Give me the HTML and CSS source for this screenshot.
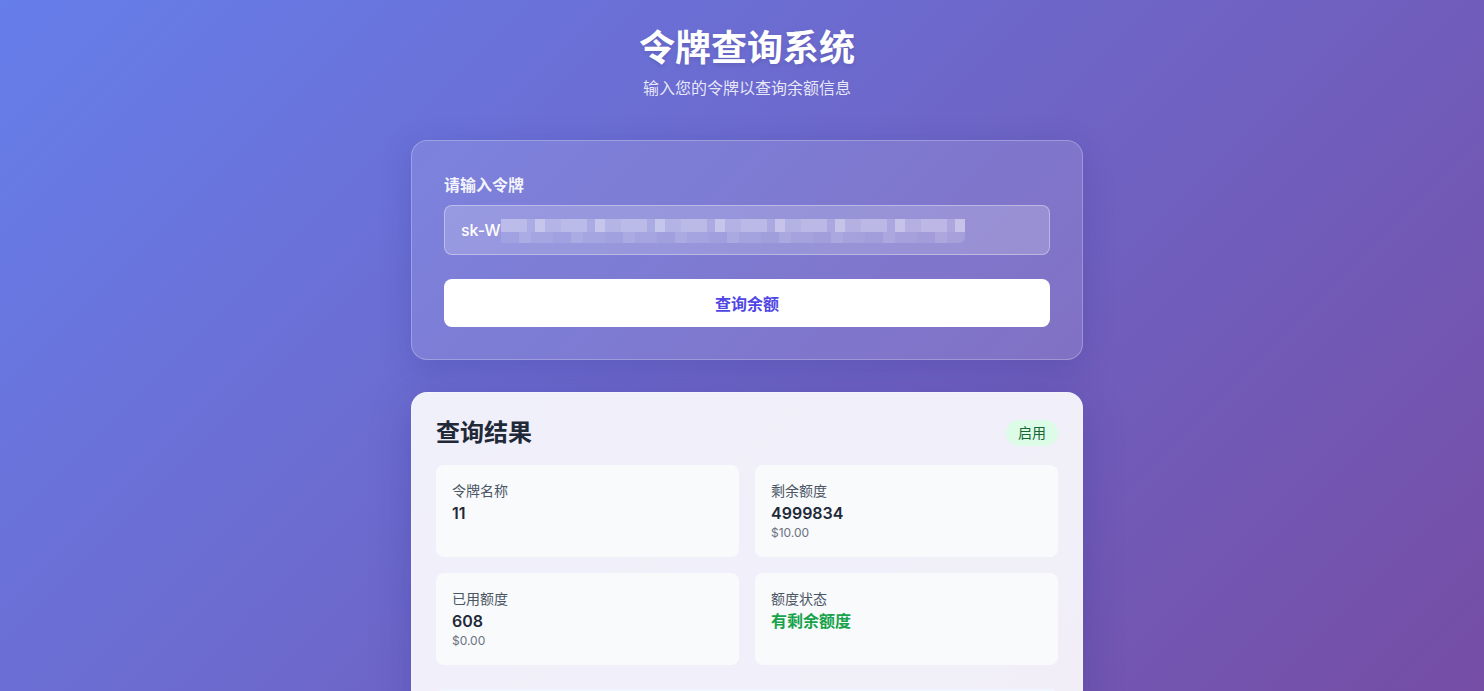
FILE: index.html
```html
<!DOCTYPE html>
<html lang="zh-CN">

<head>
    <meta charset="UTF-8">
    <meta name="viewport" content="width=device-width, initial-scale=1.0">
    <title>令牌查询系统</title>
    <link rel="stylesheet" href="styles.css">
</head>

<body>
    <div class="page">
        <header class="hero">
            <h1>令牌查询系统</h1>
            <p>输入您的令牌以查询余额信息</p>
        </header>

        <form class="query-card" id="queryForm">
            <label for="token">请输入令牌</label>
            <div class="token-input">
                <span class="token-text">sk-W</span>
                <span class="mosaic"></span>
            </div>
            <button type="button">查询余额</button>
        </form>

        <section class="result-card">
            <div class="result-head">
                <h2>查询结果</h2>
                <span class="badge">启用</span>
            </div>
            <div class="result-grid">
                <div class="cell">
                    <div class="cell-label">令牌名称</div>
                    <div class="cell-value">11</div>
                </div>
                <div class="cell">
                    <div class="cell-label">剩余额度</div>
                    <div class="cell-value">4999834</div>
                    <div class="cell-sub">$10.00</div>
                </div>
                <div class="cell">
                    <div class="cell-label">已用额度</div>
                    <div class="cell-value">608</div>
                    <div class="cell-sub">$0.00</div>
                </div>
                <div class="cell">
                    <div class="cell-label">额度状态</div>
                    <div class="cell-value ok">有剩余额度</div>
                </div>
            </div>
            <!-- next block starts just below the fold -->
            <div class="info-box"></div>
        </section>
    </div>
</body>

</html>
```

FILE: styles.css
```css
* {
    box-sizing: border-box;
}

body {
    margin: 0;
    padding-left: 10px;
    min-height: 100vh;
    font-family: Inter, "Noto Sans CJK SC", sans-serif;
    background: linear-gradient(135deg, #667eea 0%, #764ba2 100%);
    color: #1f2937;
}

.page {
    width: 672px;
    margin: 0 auto;
    padding-top: 28px;
}

.hero {
    text-align: center;
    color: #fff;
}

.hero h1 {
    margin: 0 0 8px;
    font-size: 36px;
    line-height: 40px;
    font-weight: 700;
    text-shadow: 0 2px 4px rgba(0, 0, 0, 0.1);
}

.hero p {
    margin: 0;
    font-size: 16px;
    line-height: 24px;
    color: rgba(255, 255, 255, 0.85);
}

.query-card {
    margin-top: 40px;
    padding: 32px;
    border: 1px solid rgba(255, 255, 255, 0.25);
    border-radius: 16px;
    background: rgba(255, 255, 255, 0.12);
    box-shadow: 0 8px 32px rgba(31, 38, 135, 0.2);
}

.query-card label {
    display: block;
    margin-bottom: 8px;
    font-size: 16px;
    line-height: 24px;
    font-weight: 600;
    color: rgba(255, 255, 255, 0.92);
}

.token-input {
    display: flex;
    align-items: center;
    height: 50px;
    padding: 0 16px;
    border: 1px solid rgba(255, 255, 255, 0.35);
    border-radius: 8px;
    background: rgba(255, 255, 255, 0.2);
    color: #fff;
    font-size: 16px;
    font-weight: 500;
}

.mosaic {
    display: block;
    width: 464px;
    height: 24px;
    margin-top: 2px;
    background:
        repeating-linear-gradient(90deg, rgba(255, 255, 255, 0.35) 0 26px, rgba(255, 255, 255, 0.2) 26px 34px, rgba(255, 255, 255, 0.45) 34px 44px, rgba(255, 255, 255, 0.28) 44px 60px) 0 0 / 100% 13px no-repeat,
        repeating-linear-gradient(90deg, rgba(255, 255, 255, 0.1) 0 18px, rgba(255, 255, 255, 0.2) 18px 30px, rgba(255, 255, 255, 0.14) 30px 52px) 0 13px / 100% 11px no-repeat;
    border-radius: 0 0 6px 0;
}

.query-card button {
    display: block;
    width: 100%;
    height: 48px;
    margin-top: 24px;
    border: none;
    border-radius: 8px;
    background-color: #fff;
    color: #4f46e5;
    font-family: inherit;
    font-size: 16px;
    font-weight: 600;
    cursor: pointer;
}

.result-card {
    margin-top: 32px;
    padding: 24px;
    border: 1px solid rgba(255, 255, 255, 0.3);
    border-radius: 16px;
    background: rgba(255, 255, 255, 0.9);
    box-shadow: 0 10px 40px rgba(31, 38, 135, 0.25);
}

.result-head {
    display: flex;
    justify-content: space-between;
    align-items: center;
    margin-bottom: 16px;
}

.result-head h2 {
    margin: 0;
    font-size: 24px;
    line-height: 32px;
    font-weight: 700;
    color: #1f2937;
}

.badge {
    padding: 3px 12px;
    border-radius: 999px;
    background-color: #dcfce7;
    color: #166534;
    font-size: 14px;
    line-height: 20px;
}

.result-grid {
    display: grid;
    grid-template-columns: 1fr 1fr;
    gap: 16px;
}

.cell {
    height: 92px;
    padding: 16px;
    border-radius: 8px;
    background-color: #f8fafc;
}

.cell-label {
    font-size: 14px;
    line-height: 20px;
    color: #4b5563;
}

.cell-value {
    font-size: 16px;
    line-height: 24px;
    font-weight: 600;
    color: #1f2937;
}

.cell-value.ok {
    color: #16a34a;
}

.cell-sub {
    font-size: 12px;
    line-height: 16px;
    color: #6b7280;
}

.info-box {
    height: 80px;
    margin-top: 24px;
    border-radius: 8px;
    background-color: #eff6ff;
}
```
